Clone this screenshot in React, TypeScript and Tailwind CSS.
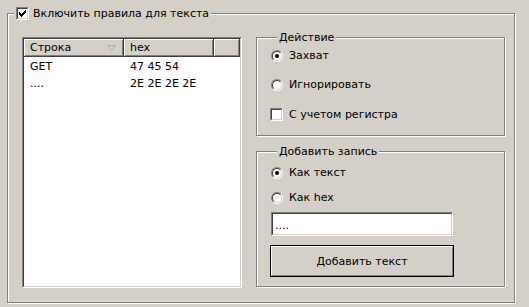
import type { ReactNode } from "react";

const CHECK = ["......X", ".....XX", "X...XXX", "XX.XXX.", "XXXXX..", ".XXX...", "..X...."];

function CheckBox({ checked }: { checked?: boolean }) {
  return (
    <span className="flex w-[13px] h-[13px] shrink-0 border border-t-[#808080] border-l-[#808080] border-r-white border-b-white">
      <span className="flex flex-1 items-center justify-center bg-white border border-t-[#404040] border-l-[#404040] border-r-[#d4d0c8] border-b-[#d4d0c8]">
        {checked && (
          <svg width="7" height="7" viewBox="0 0 7 7" shapeRendering="crispEdges">
            {CHECK.flatMap((row, y) =>
              row.split("").map((c, x) =>
                c === "X" ? <rect key={`${x}-${y}`} x={x} y={y} width="1" height="1" fill="#000" /> : null
              )
            )}
          </svg>
        )}
      </span>
    </span>
  );
}

function Radio({ checked }: { checked?: boolean }) {
  return (
    <span className="flex w-[12px] h-[12px] shrink-0 rounded-full border border-t-[#808080] border-l-[#808080] border-r-white border-b-white">
      <span className="flex flex-1 items-center justify-center rounded-full bg-white border border-t-[#404040] border-l-[#404040] border-r-[#d4d0c8] border-b-[#d4d0c8]">
        {checked && <span className="w-[4px] h-[4px] rounded-full bg-black" />}
      </span>
    </span>
  );
}

function Sunken({ className, children }: { className?: string; children?: ReactNode }) {
  return (
    <div className={`flex border border-t-[#808080] border-l-[#808080] border-r-white border-b-white ${className ?? ""}`}>
      <div className="flex flex-1 flex-col min-w-0 bg-white border border-t-[#404040] border-l-[#404040] border-r-[#d4d0c8] border-b-[#d4d0c8]">
        {children}
      </div>
    </div>
  );
}

function Group({ title, className, children }: { title: string; className?: string; children: ReactNode }) {
  return (
    <fieldset
      className={`border border-[#808080] shadow-[inset_1px_1px_0_#fff,1px_1px_0_#fff] ${className ?? ""}`}
    >
      <legend className="ml-[6px] px-[2px] h-[13px] leading-[13px] bg-[#d4d0c8]">{title}</legend>
      {children}
    </fieldset>
  );
}

function HeaderCell({ className, children }: { className?: string; children?: ReactNode }) {
  return (
    <div
      className={`flex items-center h-[18px] pl-[6px] border-r border-b border-[#404040] shadow-[inset_1px_1px_0_#fff,inset_-1px_-1px_0_#808080] ${className ?? ""}`}
    >
      {children}
    </div>
  );
}

export default function App() {
  const rows = [
    { text: "GET", hex: "47 45 54" },
    { text: "....", hex: "2E 2E 2E 2E" },
  ];

  return (
    <div className="w-[529px] h-[307px] bg-[#d4d0c8] pl-[7px] pt-[7px] text-[11px] leading-[13px] text-black font-['DejaVu_Sans',sans-serif]">
      <fieldset className="w-[508px] h-[296px] border border-[#808080] shadow-[inset_1px_1px_0_#fff,1px_1px_0_#fff]">
        <legend className="ml-[6px] px-[2px] h-[13px] flex items-center gap-[4px] bg-[#d4d0c8]">
          <CheckBox checked />
          <span>Включить правила для текста</span>
        </legend>

        <div className="flex items-start pl-[14px] pt-[11px] gap-[14px]">
          <Sunken className="w-[220px] h-[251px] mt-[6px]">
            <div className="flex bg-[#d4d0c8]">
              <HeaderCell className="w-[100px] justify-between pr-[7px]">
                <span>Строка</span>
                <svg width="9" height="6" viewBox="0 0 9 6">
                  <path d="M0.5 0.5 H8.5 L4.5 5.5 Z" fill="none" stroke="#b0b0b0" strokeWidth="1" />
                </svg>
              </HeaderCell>
              <HeaderCell className="w-[90px]">hex</HeaderCell>
              <HeaderCell className="flex-1" />
            </div>
            {rows.map((r) => (
              <div key={r.text} className="flex h-[16px] items-center mt-[1px]">
                <div className="w-[100px] pl-[6px]">{r.text}</div>
                <div className="pl-[6px]">{r.hex}</div>
              </div>
            ))}
          </Sunken>

          <div className="flex flex-col w-[249px]">
            <Group title="Действие" className="h-[105px] pl-[14px]">
              <div className="flex items-center gap-[6px] mt-[5px]">
                <Radio checked />
                <span>Захват</span>
              </div>
              <div className="flex items-center gap-[6px] mt-[16px]">
                <Radio />
                <span>Игнорировать</span>
              </div>
              <div className="flex items-center gap-[6px] mt-[17px] -ml-[1px]">
                <CheckBox />
                <span>С учетом регистра</span>
              </div>
            </Group>

            <Group title="Добавить запись" className="h-[142px] mt-[9px] pl-[14px]">
              <div className="flex items-center gap-[6px] mt-[8px]">
                <Radio checked />
                <span>Как текст</span>
              </div>
              <div className="flex items-center gap-[6px] mt-[12px]">
                <Radio />
                <span>Как hex</span>
              </div>
              <Sunken className="w-[182px] h-[24px] mt-[8px]">
                <div className="pl-[2px] pt-[5px]">....</div>
              </Sunken>
              <button className="mt-[9px] -ml-[1px] w-[184px] h-[32px] border border-black bg-[#d4d0c8] flex">
                <span className="flex flex-1 items-center justify-center border border-t-white border-l-white border-r-[#808080] border-b-[#808080]">
                  Добавить текст
                </span>
              </button>
            </Group>
          </div>
        </div>
      </fieldset>
    </div>
  );
}
